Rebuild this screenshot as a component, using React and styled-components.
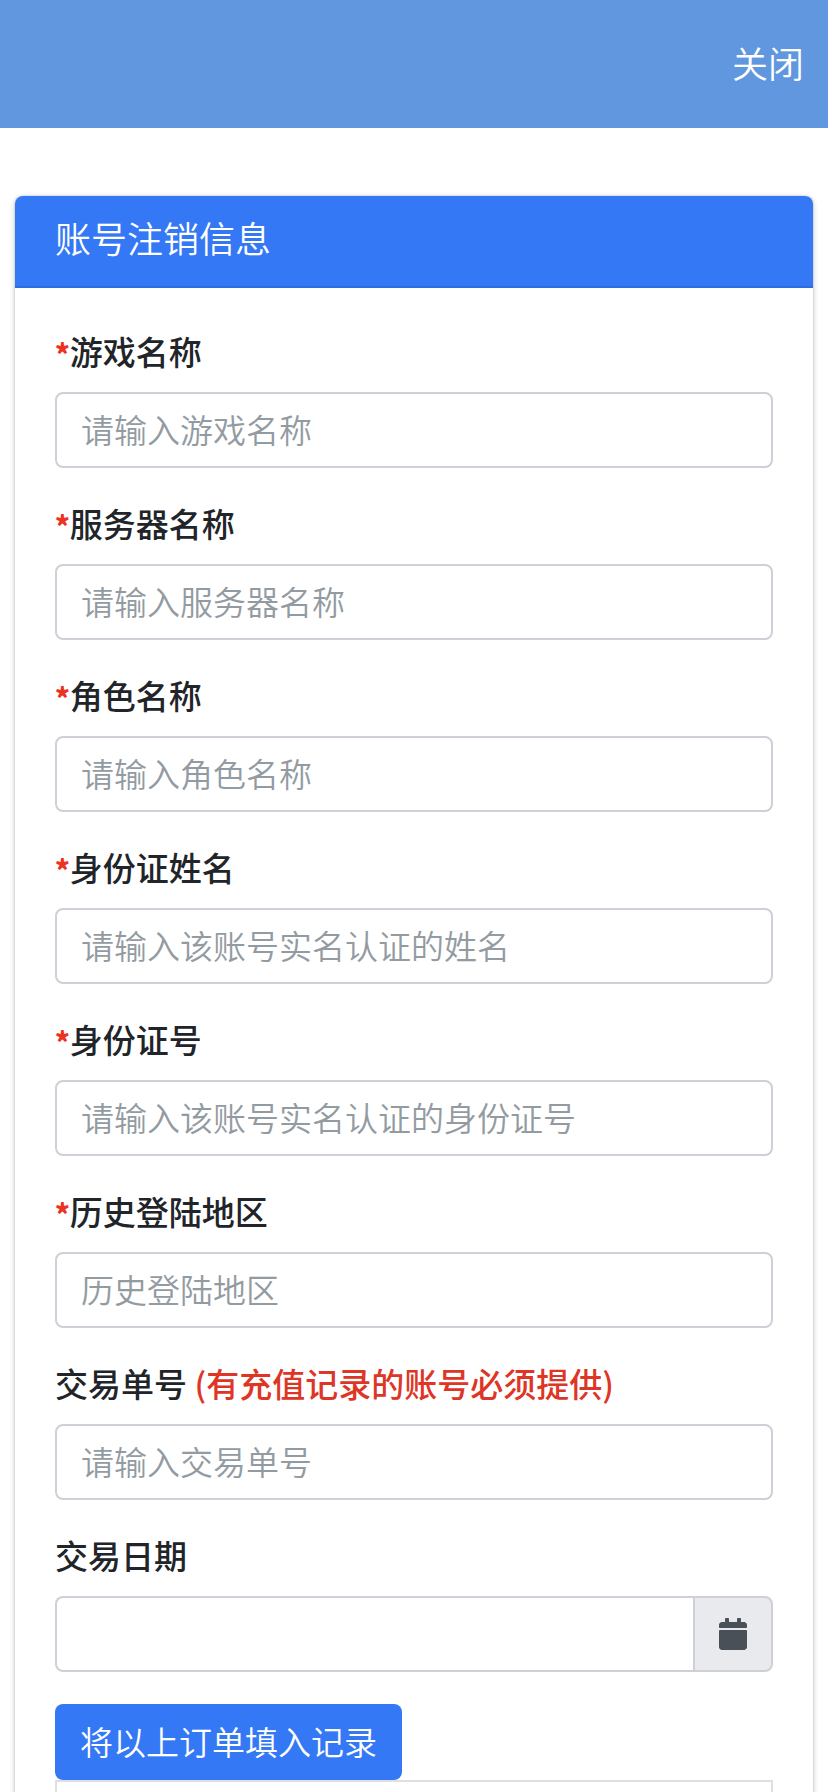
import React, { useState } from 'react';
import styled, { createGlobalStyle } from 'styled-components';
import { FaCalendar } from 'react-icons/fa';

const GlobalStyle = createGlobalStyle`
  * {
    box-sizing: border-box;
  }

  body {
    margin: 0;
    background: #fff;
    color: #212529;
    font-family: "Noto Sans CJK SC", "Liberation Sans", sans-serif;
    font-size: 33px;
    font-weight: 350;
    line-height: 46px;
  }

  input,
  button {
    font: inherit;
  }
`;

const TopBar = styled.header`
  display: flex;
  align-items: center;
  justify-content: flex-end;
  height: 128px;
  padding: 0 24px 4px;
  background: #6197de;
`;

const CloseButton = styled.button`
  padding: 0;
  border: none;
  background: none;
  color: #fff;
  font-size: 36px;
  cursor: pointer;
`;

const Main = styled.main`
  padding: 68px 15px 32px;
`;

const Card = styled.section`
  border-radius: 8px;
  background: #fff;
  box-shadow: 0 0 2px rgba(0, 0, 0, 0.25), 0 2px 6px rgba(0, 0, 0, 0.2);
`;

const CardHeader = styled.div`
  padding: 18px 40px 26px;
  border-bottom: 2px solid #2f6cdd;
  border-radius: 8px 8px 0 0;
  background: #3478f6;
  color: #fff;

  h1 {
    margin: 0;
    font-size: 36px;
    font-weight: inherit;
    line-height: 46px;
  }
`;

const Form = styled.form`
  padding: 40px;
`;

const FormGroup = styled.div`
  margin-bottom: 32px;

  label {
    display: block;
    margin-bottom: 18px;
    font-weight: 500;
  }
`;

const Required = styled.span`
  color: #ea3323;
  font-size: 28px;
  font-weight: 900;
  line-height: 1;
`;

const Note = styled.span`
  color: #de3626;
`;

const TextInput = styled.input`
  display: block;
  flex: 1;
  width: 100%;
  min-width: 0;
  height: 76px;
  padding: 0 24px 2px;
  border: 2px solid #cfd0d7;
  border-radius: ${({ $grouped }) => ($grouped ? '8px 0 0 8px' : '8px')};
  border-right-width: ${({ $grouped }) => ($grouped ? 0 : '2px')};
  background: #fff;
  color: #495057;

  &::placeholder {
    color: #939ba2;
    opacity: 1;
  }

  &:focus {
    outline: none;
    border-color: #80bdff;
  }
`;

const InputGroup = styled.div`
  display: flex;
`;

const CalendarButton = styled.button`
  display: flex;
  align-items: center;
  justify-content: center;
  width: 80px;
  height: 76px;
  padding: 0;
  border: 2px solid #cfd0d7;
  border-radius: 0 8px 8px 0;
  background: #e9eaee;
  color: #495057;
  font-size: 32px;
  cursor: pointer;
`;

const FillButton = styled.button`
  display: block;
  height: 76px;
  padding: 0 25px 2px;
  border: none;
  border-radius: 8px;
  background: #3478f6;
  color: #fff;
  cursor: pointer;
`;

const RecordBox = styled.div`
  min-height: 160px;
  border: 2px solid #dedfe3;
`;

const FIELDS = [
  { name: 'game', label: '游戏名称', placeholder: '请输入游戏名称', required: true },
  { name: 'server', label: '服务器名称', placeholder: '请输入服务器名称', required: true },
  { name: 'role', label: '角色名称', placeholder: '请输入角色名称', required: true },
  { name: 'realName', label: '身份证姓名', placeholder: '请输入该账号实名认证的姓名', required: true },
  { name: 'idNumber', label: '身份证号', placeholder: '请输入该账号实名认证的身份证号', required: true },
  { name: 'region', label: '历史登陆地区', placeholder: '历史登陆地区', required: true },
  { name: 'orderNo', label: '交易单号', placeholder: '请输入交易单号', note: '(有充值记录的账号必须提供)' },
];

const App = () => {
  const [formData, setFormData] = useState({});
  const [records, setRecords] = useState([]);

  const handleChange = (e) => {
    const { name, value } = e.target;
    setFormData(prev => ({ ...prev, [name]: value }));
  };

  const addRecord = () => {
    if (!formData.orderNo) return;
    setRecords(prev => [...prev, { orderNo: formData.orderNo, date: formData.date }]);
  };

  return (
    <>
      <GlobalStyle />
      <TopBar>
        <CloseButton type="button">关闭</CloseButton>
      </TopBar>

      <Main>
        <Card>
          <CardHeader>
            <h1>账号注销信息</h1>
          </CardHeader>

          <Form onSubmit={(e) => e.preventDefault()}>
            {FIELDS.map(({ name, label, placeholder, required, note }) => (
              <FormGroup key={name}>
                <label htmlFor={name}>
                  {required && <Required>*</Required>}
                  {label}
                  {note && <Note> {note}</Note>}
                </label>
                <TextInput
                  type="text"
                  id={name}
                  name={name}
                  value={formData[name] || ''}
                  onChange={handleChange}
                  placeholder={placeholder}
                />
              </FormGroup>
            ))}

            <FormGroup>
              <label htmlFor="date">交易日期</label>
              <InputGroup>
                <TextInput
                  $grouped
                  type="text"
                  id="date"
                  name="date"
                  value={formData.date || ''}
                  onChange={handleChange}
                />
                <CalendarButton type="button" aria-label="交易日期">
                  <FaCalendar />
                </CalendarButton>
              </InputGroup>
            </FormGroup>

            <FillButton type="button" onClick={addRecord}>将以上订单填入记录</FillButton>
            <RecordBox>
              {records.map((record, index) => (
                <div key={index}>{record.orderNo} {record.date}</div>
              ))}
            </RecordBox>
          </Form>
        </Card>
      </Main>
    </>
  );
};

export default App;
